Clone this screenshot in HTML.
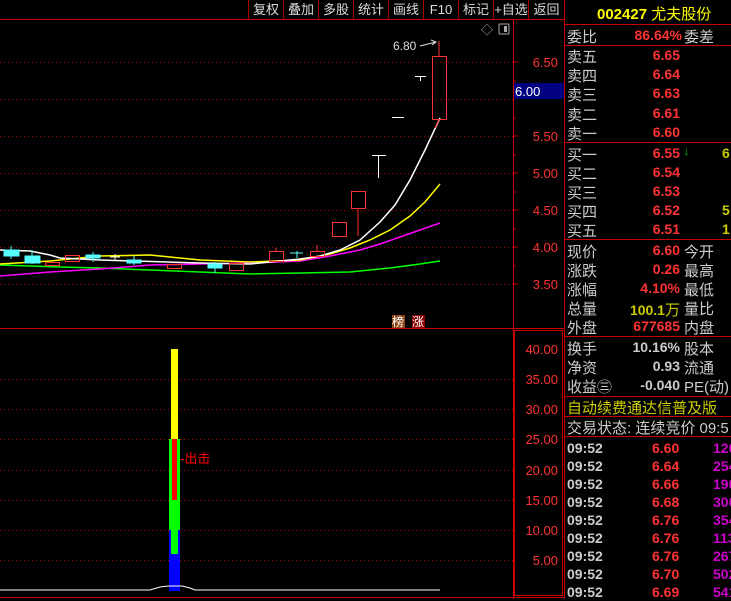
<!DOCTYPE html>
<html><head><meta charset="utf-8"><style>
*{margin:0;padding:0;box-sizing:border-box}
body{width:731px;height:599px;background:#000;overflow:hidden;position:relative;font-family:"Liberation Sans","Noto Sans CJK SC",sans-serif;color:#c8c8c8}
.a{position:absolute;white-space:nowrap}
.tb{position:absolute;top:0;height:19px;border-left:1px solid #a00;font-size:13px;color:#ddd;line-height:19px;text-align:center}
.lb{font-size:15px;color:#ccc;left:567px}
.n{font-family:"Liberation Sans",sans-serif;font-weight:bold;font-size:14px;color:#ff3333;text-align:right}
.hl{position:absolute;left:564px;width:167px;height:1px;background:#c00}
</style></head><body>
<div class="tb" style="left:248px;width:35px">复权</div>
<div class="tb" style="left:283px;width:35px">叠加</div>
<div class="tb" style="left:318px;width:35px">多股</div>
<div class="tb" style="left:353px;width:35px">统计</div>
<div class="tb" style="left:388px;width:35px">画线</div>
<div class="tb" style="left:423px;width:35px">F10</div>
<div class="tb" style="left:458px;width:35px">标记</div>
<div class="tb" style="left:493px;width:35px">+自选</div>
<div class="tb" style="left:528px;width:36px">返回</div>
<svg class="a" style="left:0;top:0" width="564" height="599">
<line x1="0" y1="19.5" x2="564" y2="19.5" stroke="#c00"/>
<line x1="513.5" y1="20" x2="513.5" y2="599" stroke="#c00"/>
<line x1="0" y1="328.5" x2="564" y2="328.5" stroke="#c00"/>
<rect x="514.5" y="330.5" width="48" height="265" fill="none" stroke="#c00"/>
<line x1="0" y1="597.5" x2="564" y2="597.5" stroke="#c00"/>
<g stroke="#a00" stroke-dasharray="1,3">
<line x1="0" y1="62.5" x2="513" y2="62.5"/><line x1="0" y1="99.5" x2="513" y2="99.5"/>
<line x1="0" y1="136.5" x2="513" y2="136.5"/><line x1="0" y1="173.5" x2="513" y2="173.5"/>
<line x1="0" y1="210.5" x2="513" y2="210.5"/><line x1="0" y1="247.5" x2="513" y2="247.5"/>
<line x1="0" y1="284.5" x2="513" y2="284.5"/>
<line x1="0" y1="379.5" x2="513" y2="379.5"/><line x1="0" y1="409.5" x2="513" y2="409.5"/>
<line x1="0" y1="439.5" x2="513" y2="439.5"/><line x1="0" y1="470.5" x2="513" y2="470.5"/>
<line x1="0" y1="500.5" x2="513" y2="500.5"/><line x1="0" y1="530.5" x2="513" y2="530.5"/>
<line x1="0" y1="560.5" x2="513" y2="560.5"/>
</g>
<g stroke="#c00"><line x1="513" y1="62" x2="518" y2="62"/><line x1="513" y1="81" x2="516" y2="81"/><line x1="513" y1="118" x2="516" y2="118"/><line x1="513" y1="136" x2="518" y2="136"/><line x1="513" y1="155" x2="516" y2="155"/><line x1="513" y1="173" x2="518" y2="173"/><line x1="513" y1="192" x2="516" y2="192"/><line x1="513" y1="210" x2="518" y2="210"/><line x1="513" y1="229" x2="516" y2="229"/><line x1="513" y1="247" x2="518" y2="247"/><line x1="513" y1="266" x2="516" y2="266"/><line x1="513" y1="284" x2="518" y2="284"/></g>
<g font-size="13" fill="#ff3333" font-family="Liberation Sans">
<text x="558" y="67" text-anchor="end">6.50</text>
<text x="558" y="141" text-anchor="end">5.50</text><text x="558" y="178" text-anchor="end">5.00</text>
<text x="558" y="215" text-anchor="end">4.50</text><text x="558" y="252" text-anchor="end">4.00</text>
<text x="558" y="289" text-anchor="end">3.50</text>
<text x="558" y="354" text-anchor="end">40.00</text><text x="558" y="384" text-anchor="end">35.00</text>
<text x="558" y="414" text-anchor="end">30.00</text><text x="558" y="444" text-anchor="end">25.00</text>
<text x="558" y="475" text-anchor="end">20.00</text><text x="558" y="505" text-anchor="end">15.00</text>
<text x="558" y="535" text-anchor="end">10.00</text><text x="558" y="565" text-anchor="end">5.00</text>
</g>
<rect x="514" y="83" width="50" height="16" fill="#000080"/>
<text x="515" y="96" font-size="13" fill="#fff" font-family="Liberation Sans">6.00</text>
<text x="481" y="34" font-size="12" fill="#aaa">◇</text>
<rect x="499" y="24" width="10" height="10" rx="1" fill="none" stroke="#aaa"/><rect x="504" y="26" width="3" height="6" fill="#aaa"/>
<text x="393" y="50" font-size="12" fill="#ddd" font-family="Liberation Sans">6.80</text>
<path d="M420 46 L436 42 M431 40 L436 42 L432 45" stroke="#ddd" fill="none"/>
<g fill="none" stroke-width="1.5">
<polyline stroke="#00ff00" points="0,265 60,267 100,268 150,270 200,272 250,274 300,273 350,272 390,268 420,264 440,261"/>
<polyline stroke="#ff00ff" points="0,276 50,272 100,269 150,265 200,264 250,263 300,261 330,256 360,250 380,244 400,237 420,230 440,223"/>
<polyline stroke="#ffff00" points="0,264 50,261 100,256 150,255 200,260 250,262 300,260 330,254 350,248 370,240 390,230 410,216 425,202 440,184"/>
<polyline stroke="#ffffff" points="0,250 30,251 50,255 60,258 100,260 200,263 250,264 300,259 320,256 340,250 360,240 380,222 395,205 410,180 425,150 440,118"/>
</g>
<g fill="#5ff" stroke="#5ff">
<line x1="11" y1="246" x2="11" y2="259"/><rect x="4" y="250" width="15" height="6"/>
<line x1="32" y1="250" x2="32" y2="264"/><rect x="25" y="256" width="15" height="7"/>
<rect x="86" y="255" width="14" height="3"/><line x1="93" y1="252" x2="93" y2="262"/>
<rect x="127" y="260" width="14" height="3"/><line x1="134" y1="256" x2="134" y2="265"/>
<rect x="208" y="264" width="14" height="4"/><line x1="215" y1="262" x2="215" y2="273"/>
<line x1="290" y1="253" x2="303" y2="253"/><line x1="297" y1="251" x2="297" y2="258"/>
</g>
<g fill="none" stroke="#ff3333">
<rect x="45.5" y="262.5" width="14" height="3"/><rect x="65.5" y="255.5" width="14" height="6"/>
<rect x="167.5" y="264.5" width="14" height="4"/><rect x="229.5" y="263.5" width="14" height="7"/>
<rect x="269.5" y="251.5" width="14" height="10"/><line x1="276" y1="248" x2="276" y2="251"/>
<rect x="310.5" y="251.5" width="14" height="5"/><line x1="317" y1="245" x2="317" y2="251"/>
<rect x="332.5" y="222.5" width="14" height="14"/>
<rect x="351.5" y="191.5" width="14" height="17"/><line x1="358" y1="209" x2="358" y2="236"/>
<rect x="432.5" y="56.5" width="14" height="63"/><line x1="439" y1="41" x2="439" y2="56"/><line x1="439" y1="120" x2="435" y2="128"/>
</g>
<g stroke="#fff">
<line x1="110" y1="257" x2="120" y2="257"/><line x1="115" y1="254" x2="115" y2="261"/>
<line x1="372" y1="155.5" x2="386" y2="155.5"/><line x1="378.5" y1="155" x2="378.5" y2="178"/>
<line x1="392" y1="117.5" x2="404" y2="117.5"/>
<line x1="415" y1="76.5" x2="426" y2="76.5"/><line x1="420.5" y1="76" x2="420.5" y2="81"/>
</g>
<rect x="392" y="315" width="13" height="13" fill="#8b4513"/><text x="392" y="326" font-size="12" fill="#fff">榜</text>
<rect x="412" y="315" width="13" height="13" fill="#8b0000"/><text x="412" y="326" font-size="12" fill="#fff">涨</text>
<rect x="171" y="349" width="7" height="90" fill="#ff0"/>
<rect x="169" y="439" width="11" height="91" fill="#0f0"/>
<rect x="172" y="439" width="5" height="61" fill="#f00"/>
<rect x="169" y="530" width="11" height="61" fill="#00f"/>
<rect x="171" y="530" width="7" height="24" fill="#0f0"/>
<polyline points="0,590 150,590 160,587 168,586 182,586 190,588 195,590 440,590" fill="none" stroke="#fff"/>
<text x="180" y="463" font-size="13" fill="#f00">-出击</text>
</svg>
<div class="a" style="left:564px;top:0;width:1px;height:599px;background:#c00"></div>
<div class="a" style="left:597px;top:3px;font-size:15px;color:#ff0"><b style="font-family:'Liberation Sans'">002427</b> 尤夫股份</div>
<div class="hl" style="top:24px"></div>
<div class="a lb" style="top:26px">委比</div><div class="a n" style="left:610px;width:72px;top:27px">86.64%</div><div class="a lb" style="left:684px;top:26px">委差</div>
<div class="hl" style="top:45px"></div>
<div class="a lb" style="top:46px">卖五</div><div class="a n" style="left:620px;width:60px;top:47px">6.65</div>
<div class="a lb" style="top:65px">卖四</div><div class="a n" style="left:620px;width:60px;top:66px">6.64</div>
<div class="a lb" style="top:84px">卖三</div><div class="a n" style="left:620px;width:60px;top:85px">6.63</div>
<div class="a lb" style="top:104px">卖二</div><div class="a n" style="left:620px;width:60px;top:105px">6.61</div>
<div class="a lb" style="top:123px">卖一</div><div class="a n" style="left:620px;width:60px;top:124px">6.60</div>
<div class="hl" style="top:142px"></div>
<div class="a lb" style="top:144px">买一</div><div class="a n" style="left:620px;width:60px;top:145px">6.55</div><div class="a" style="left:683px;top:143px;color:#0a0;font-size:13px;font-weight:bold">↓</div><div class="a n" style="left:722px;top:145px;color:#cc0">6</div>
<div class="a lb" style="top:163px">买二</div><div class="a n" style="left:620px;width:60px;top:164px">6.54</div>
<div class="a lb" style="top:182px">买三</div><div class="a n" style="left:620px;width:60px;top:183px">6.53</div>
<div class="a lb" style="top:201px">买四</div><div class="a n" style="left:620px;width:60px;top:202px">6.52</div><div class="a n" style="left:722px;top:202px;color:#cc0">5</div>
<div class="a lb" style="top:220px">买五</div><div class="a n" style="left:620px;width:60px;top:221px">6.51</div><div class="a n" style="left:722px;top:221px;color:#cc0">1</div>
<div class="hl" style="top:239px"></div>
<div class="a lb" style="top:241px">现价</div><div class="a n" style="left:620px;width:60px;top:242px">6.60</div><div class="a lb" style="left:684px;top:241px">今开</div>
<div class="a lb" style="top:260px">涨跌</div><div class="a n" style="left:620px;width:60px;top:261px">0.26</div><div class="a lb" style="left:684px;top:260px">最高</div>
<div class="a lb" style="top:279px">涨幅</div><div class="a n" style="left:620px;width:60px;top:280px">4.10%</div><div class="a lb" style="left:684px;top:279px">最低</div>
<div class="a lb" style="top:298px">总量</div><div class="a n" style="left:610px;width:70px;top:299px;color:#cc0">100.1<span style="font-weight:normal;font-size:15px">万</span></div><div class="a lb" style="left:684px;top:298px">量比</div>
<div class="a lb" style="top:317px">外盘</div><div class="a n" style="left:620px;width:60px;top:318px">677685</div><div class="a lb" style="left:684px;top:317px">内盘</div>
<div class="hl" style="top:336px"></div>
<div class="a lb" style="top:338px">换手</div><div class="a n" style="left:620px;width:60px;top:339px;color:#ccc">10.16%</div><div class="a lb" style="left:684px;top:338px">股本</div>
<div class="a lb" style="top:357px">净资</div><div class="a n" style="left:620px;width:60px;top:358px;color:#ccc">0.93</div><div class="a lb" style="left:684px;top:357px">流通</div>
<div class="a lb" style="top:376px">收益㊂</div><div class="a n" style="left:620px;width:60px;top:377px;color:#ccc">-0.040</div><div class="a lb" style="left:684px;top:376px">PE(动)</div>
<div class="hl" style="top:396px"></div>
<div class="a lb" style="top:397px;color:#cc0">自动续费通达信普及版</div>
<div class="hl" style="top:416px"></div>
<div class="a lb" style="top:417px">交易状态: 连续竞价 09:5</div>
<div class="hl" style="top:436px"></div>
<div class="a" style="left:567px;top:439px;width:164px;font-family:'Liberation Sans';font-weight:bold;font-size:14px;line-height:18px">
<div><span style="color:#ccc">09:52</span><span style="position:absolute;left:85px;color:#f33">6.60</span><span style="position:absolute;left:146px;color:#c0c">120</span></div>
<div><span style="color:#ccc">09:52</span><span style="position:absolute;left:85px;color:#f33">6.64</span><span style="position:absolute;left:146px;color:#c0c">254</span></div>
<div><span style="color:#ccc">09:52</span><span style="position:absolute;left:85px;color:#f33">6.66</span><span style="position:absolute;left:146px;color:#c0c">190</span></div>
<div><span style="color:#ccc">09:52</span><span style="position:absolute;left:85px;color:#f33">6.68</span><span style="position:absolute;left:146px;color:#c0c">300</span></div>
<div><span style="color:#ccc">09:52</span><span style="position:absolute;left:85px;color:#f33">6.76</span><span style="position:absolute;left:146px;color:#c0c">354</span></div>
<div><span style="color:#ccc">09:52</span><span style="position:absolute;left:85px;color:#f33">6.76</span><span style="position:absolute;left:146px;color:#c0c">113</span></div>
<div><span style="color:#ccc">09:52</span><span style="position:absolute;left:85px;color:#f33">6.76</span><span style="position:absolute;left:146px;color:#c0c">267</span></div>
<div><span style="color:#ccc">09:52</span><span style="position:absolute;left:85px;color:#f33">6.70</span><span style="position:absolute;left:146px;color:#c0c">502</span></div>
<div><span style="color:#ccc">09:52</span><span style="position:absolute;left:85px;color:#f33">6.69</span><span style="position:absolute;left:146px;color:#c0c">541</span></div>
</div>
</body></html>
